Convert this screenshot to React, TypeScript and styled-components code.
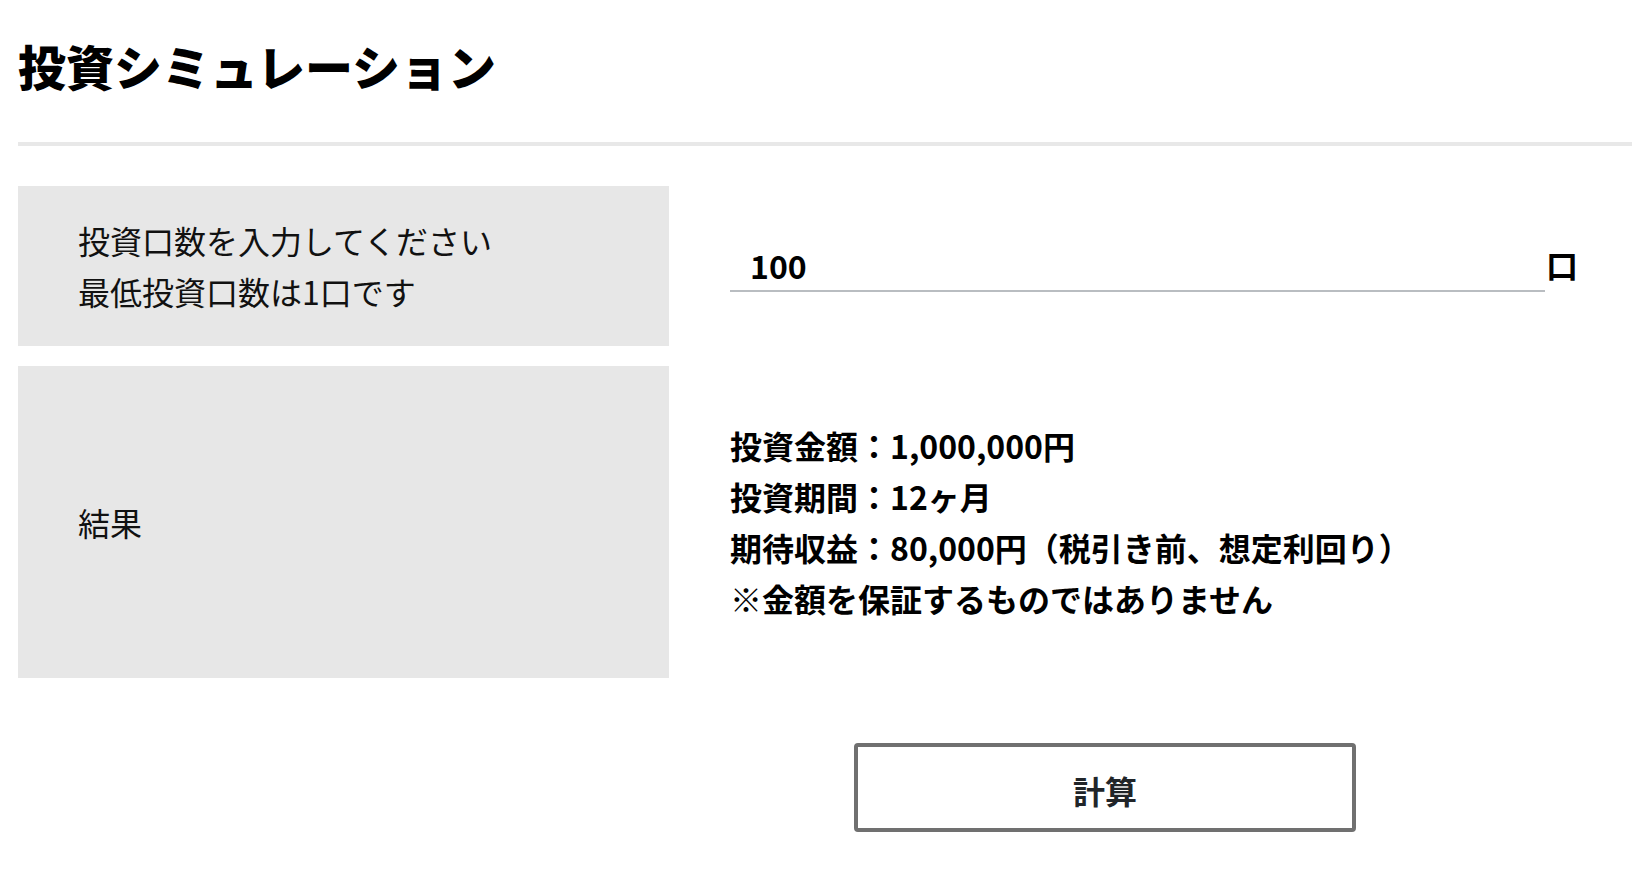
import { useState } from "react";
import styled, { createGlobalStyle } from "styled-components";

const GlobalStyle = createGlobalStyle`
  html, body {
    margin: 0;
    padding: 0;
    background: #fff;
  }
  body {
    font-family: "Noto Sans CJK JP", "Noto Sans", sans-serif;
    color: #111;
  }
  * {
    box-sizing: border-box;
  }
`;

const App = () => {
  const [units, setUnits] = useState("100");

  return (
    <>
      <GlobalStyle />
      <PageWrapper>
        <Title>投資シミュレーション</Title>
        <Divider />
        <FormGrid>
          <LabelCell height={160}>
            <div>
              投資口数を入力してください
              <br />
              最低投資口数は1口です
            </div>
          </LabelCell>
          <InputCell>
            <UnitInput
              type="text"
              value={units}
              onChange={(e) => setUnits(e.target.value)}
            />
            <UnitLabel>口</UnitLabel>
          </InputCell>
          <LabelCell height={312}>結果</LabelCell>
          <ResultCell>
            <ResultText>
              投資金額：1,000,000円
              <br />
              投資期間：12ヶ月
              <br />
              期待収益：80,000円（税引き前、想定利回り）
              <br />
              ※金額を保証するものではありません
            </ResultText>
          </ResultCell>
          <ButtonRow>
            <CalcButton type="button">計算</CalcButton>
          </ButtonRow>
        </FormGrid>
      </PageWrapper>
    </>
  );
};

const PageWrapper = styled.div`
  width: 100%;
  padding-left: 18px;
  padding-bottom: 40px;
`;

const Title = styled.h1`
  margin: 41px 0 0 0;
  font-size: 48px;
  line-height: 48px;
  font-weight: 900;
  color: #000;
`;

const Divider = styled.div`
  height: 4px;
  margin-top: 53px;
  background-color: #e8e8e8;
`;

const FormGrid = styled.div`
  display: grid;
  grid-template-columns: 651px 1fr;
  column-gap: 61px;
  row-gap: 20px;
  margin-top: 40px;
`;

const LabelCell = styled.div<{ height: number }>`
  height: ${({ height }) => height}px;
  display: flex;
  align-items: center;
  padding: 0 60px;
  background-color: #e7e7e7;
  font-size: 32px;
  line-height: 51px;
  color: #111;
`;

const InputCell = styled.div`
  display: flex;
  align-items: center;
  padding-top: 4px;
`;

const UnitInput = styled.input`
  width: 815px;
  height: 48px;
  padding: 0 0 4px 20px;
  border: none;
  border-bottom: 2px solid #b9bdc1;
  outline: none;
  background: transparent;
  font-family: "Noto Sans CJK JP", "Noto Sans", sans-serif;
  font-size: 32px;
  font-weight: 700;
  color: #000;
`;

const UnitLabel = styled.span`
  margin-left: 1px;
  margin-top: -8px;
  font-size: 32px;
  font-weight: 700;
  color: #000;
`;

const ResultCell = styled.div`
  display: flex;
  align-items: center;
`;

const ResultText = styled.div`
  font-size: 32px;
  line-height: 51px;
  font-weight: 700;
  color: #000;
`;

const ButtonRow = styled.div`
  grid-column: 2;
  margin-top: 45px;
  padding-left: 124px;
`;

const CalcButton = styled.button`
  width: 502px;
  height: 89px;
  padding-top: 6px;
  border: 4px solid #707070;
  border-radius: 4px;
  background: #fff;
  font-family: "Noto Sans CJK JP", "Noto Sans", sans-serif;
  font-size: 32px;
  font-weight: 700;
  color: #212529;
  cursor: pointer;
`;

export default App;
